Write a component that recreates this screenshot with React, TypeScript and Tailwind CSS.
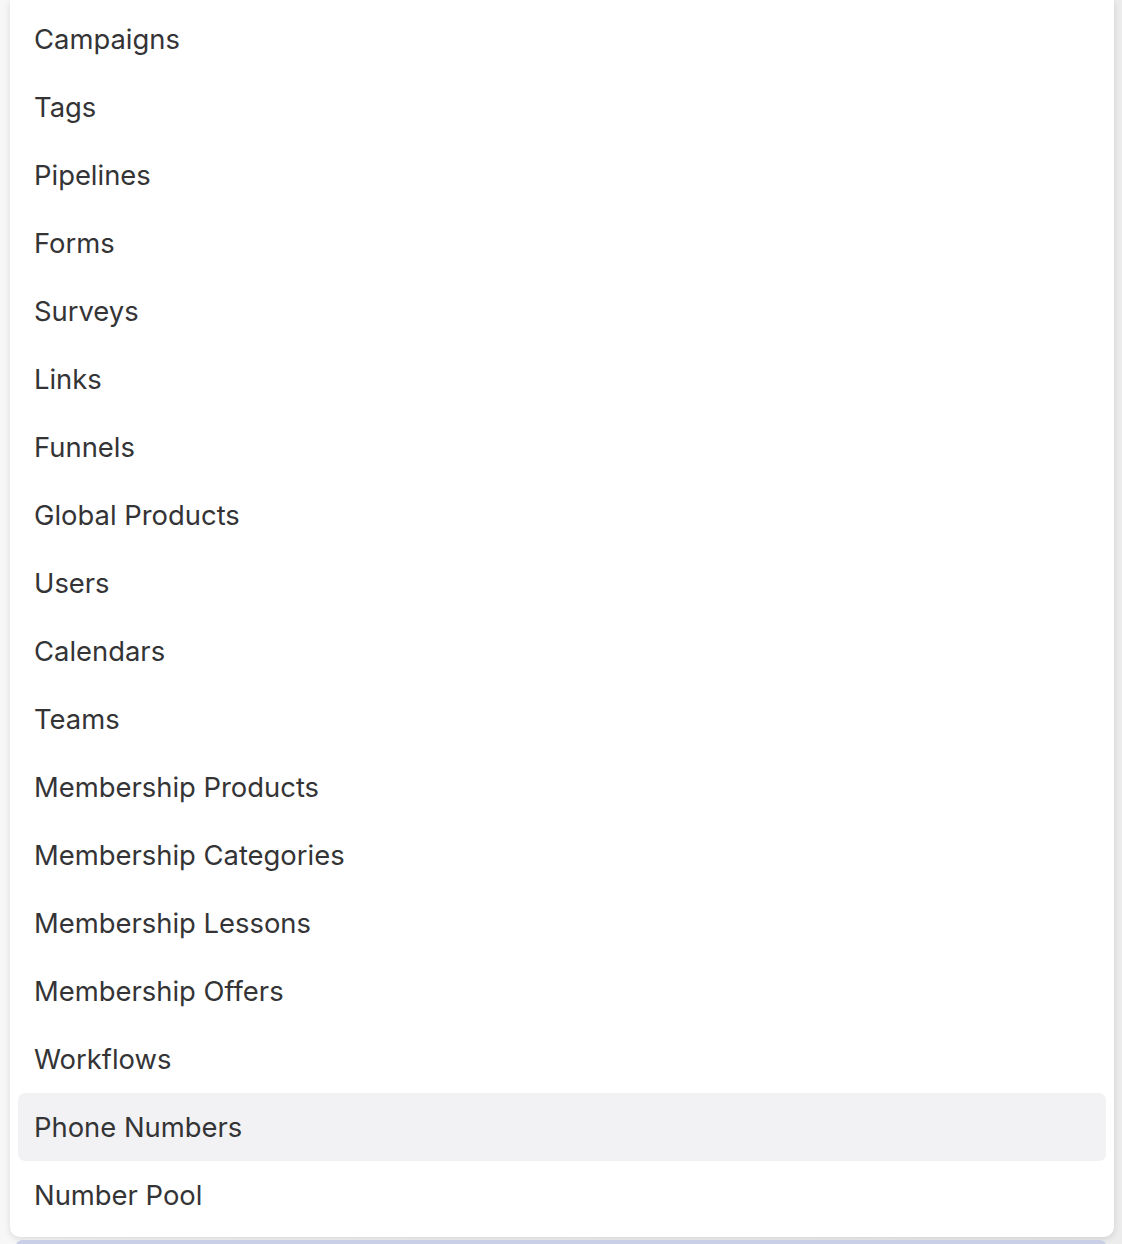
const items = [
  "Campaigns",
  "Tags",
  "Pipelines",
  "Forms",
  "Surveys",
  "Links",
  "Funnels",
  "Global Products",
  "Users",
  "Calendars",
  "Teams",
  "Membership Products",
  "Membership Categories",
  "Membership Lessons",
  "Membership Offers",
  "Workflows",
  "Phone Numbers",
  "Number Pool",
];

export default function App() {
  const active = "Phone Numbers";
  return (
    <div className="min-h-screen w-[1122px] h-[1244px] overflow-hidden bg-gradient-to-r from-[#f7f7f7] via-[#f2f2f2] to-[#ececec] px-[10px] pr-[8px] font-['Inter','Noto_Sans',sans-serif]">
      {/* Dropdown panel */}
      <div className="bg-white rounded-b-[10px] shadow-[0_2px_6px_rgba(0,0,0,0.12)] px-[8px] pt-[5px] pb-[8px]">
        <ul>
          {items.map((label) => (
            <li
              key={label}
              className={`h-[68px] flex items-center pt-[2px] px-[16px] rounded-[7px] text-[27.4px] text-[#343436] ${
                label === active ? "bg-[#f2f2f4]" : ""
              }`}
            >
              {label}
            </li>
          ))}
        </ul>
      </div>
      {/* next element peeking below */}
      <div className="mt-[3px] ml-[6px] mr-[8px] h-[6px] rounded-t-[8px] bg-[#c9cfe6]" />
    </div>
  );
}
